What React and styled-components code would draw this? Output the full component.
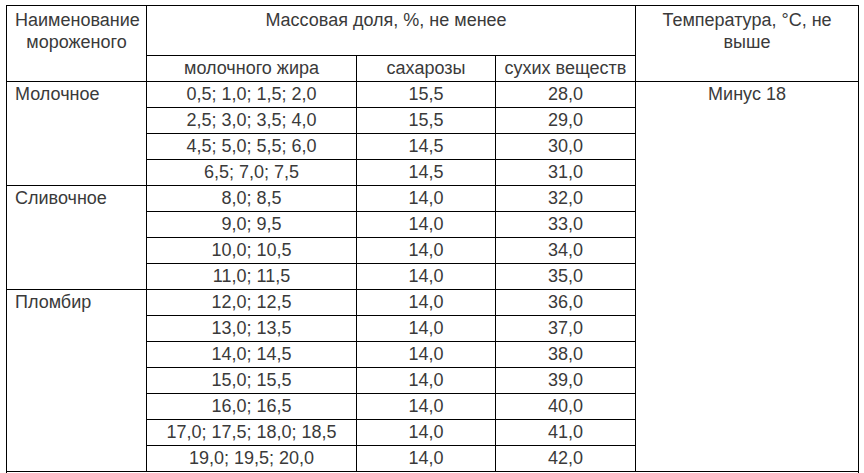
import React from "react";
import styled, { createGlobalStyle } from "styled-components";

const GlobalStyle = createGlobalStyle`
  body {
    margin: 0;
    background: #fff;
    font-family: "Liberation Sans", Arial, sans-serif;
  }
`;

const groups = [
  {
    name: "Молочное",
    rows: [
      ["0,5; 1,0; 1,5; 2,0", "15,5", "28,0"],
      ["2,5; 3,0; 3,5; 4,0", "15,5", "29,0"],
      ["4,5; 5,0; 5,5; 6,0", "14,5", "30,0"],
      ["6,5; 7,0; 7,5", "14,5", "31,0"],
    ],
  },
  {
    name: "Сливочное",
    rows: [
      ["8,0; 8,5", "14,0", "32,0"],
      ["9,0; 9,5", "14,0", "33,0"],
      ["10,0; 10,5", "14,0", "34,0"],
      ["11,0; 11,5", "14,0", "35,0"],
    ],
  },
  {
    name: "Пломбир",
    rows: [
      ["12,0; 12,5", "14,0", "36,0"],
      ["13,0; 13,5", "14,0", "37,0"],
      ["14,0; 14,5", "14,0", "38,0"],
      ["15,0; 15,5", "14,0", "39,0"],
      ["16,0; 16,5", "14,0", "40,0"],
      ["17,0; 17,5; 18,0; 18,5", "14,0", "41,0"],
      ["19,0; 19,5; 20,0", "14,0", "42,0"],
    ],
  },
];

const totalRows = groups.reduce((n, g) => n + g.rows.length, 0);

const App = () => {
  return (
    <Page>
      <GlobalStyle />
      <Table>
        <colgroup>
          <col style={{ width: 140 }} />
          <col style={{ width: 210 }} />
          <col style={{ width: 139 }} />
          <col style={{ width: 140 }} />
          <col style={{ width: 223 }} />
        </colgroup>
        <thead>
          <Row $h={50}>
            <HeadCell rowSpan={2}>Наименование мороженого</HeadCell>
            <HeadCell colSpan={3} $shift>
              Массовая доля, %, не менее
            </HeadCell>
            <HeadCell rowSpan={2}>Температура, °С, не выше</HeadCell>
          </Row>
          <Row $h={26}>
            <Cell>молочного жира</Cell>
            <Cell>сахарозы</Cell>
            <Cell>сухих веществ</Cell>
          </Row>
        </thead>
        <tbody>
          {groups.map((g, gi) =>
            g.rows.map((r, ri) => (
              <Row $h={26} key={g.name + ri}>
                {ri === 0 && (
                  <NameCell rowSpan={g.rows.length}>{g.name}</NameCell>
                )}
                <Cell>{r[0]}</Cell>
                <Cell>{r[1]}</Cell>
                <Cell>{r[2]}</Cell>
                {gi === 0 && ri === 0 && (
                  <TopCell rowSpan={totalRows}>Минус 18</TopCell>
                )}
              </Row>
            ))
          )}
          <Row $h={26}>
            <Cell colSpan={5}>&nbsp;</Cell>
          </Row>
        </tbody>
      </Table>
    </Page>
  );
};

const Page = styled.div`
  padding: 5px 6px 0;
  height: 473px;
  box-sizing: border-box;
  overflow: hidden;
`;

const Table = styled.table`
  width: 853px;
  table-layout: fixed;
  border-collapse: collapse;
  color: #3a3a3a;
  font-size: 18px;

  td,
  th {
    border: 1px solid #000;
  }
`;

const Row = styled.tr`
  height: ${(p) => p.$h}px;
`;

const HeadCell = styled.th`
  font-weight: normal;
  vertical-align: top;
  text-align: center;
  line-height: 22px;
  padding: 3px 8px 1px;
  padding-right: ${(p) => (p.$shift ? "18px" : "8px")};
`;

const Cell = styled.td`
  text-align: center;
  vertical-align: middle;
  line-height: 21px;
  padding: 2px 8px;
  white-space: nowrap;
`;

const NameCell = styled.td`
  text-align: left;
  vertical-align: top;
  line-height: 21px;
  padding: 2px 8px;
`;

const TopCell = styled.td`
  text-align: center;
  vertical-align: top;
  line-height: 21px;
  padding: 2px 8px;
`;

export default App;
